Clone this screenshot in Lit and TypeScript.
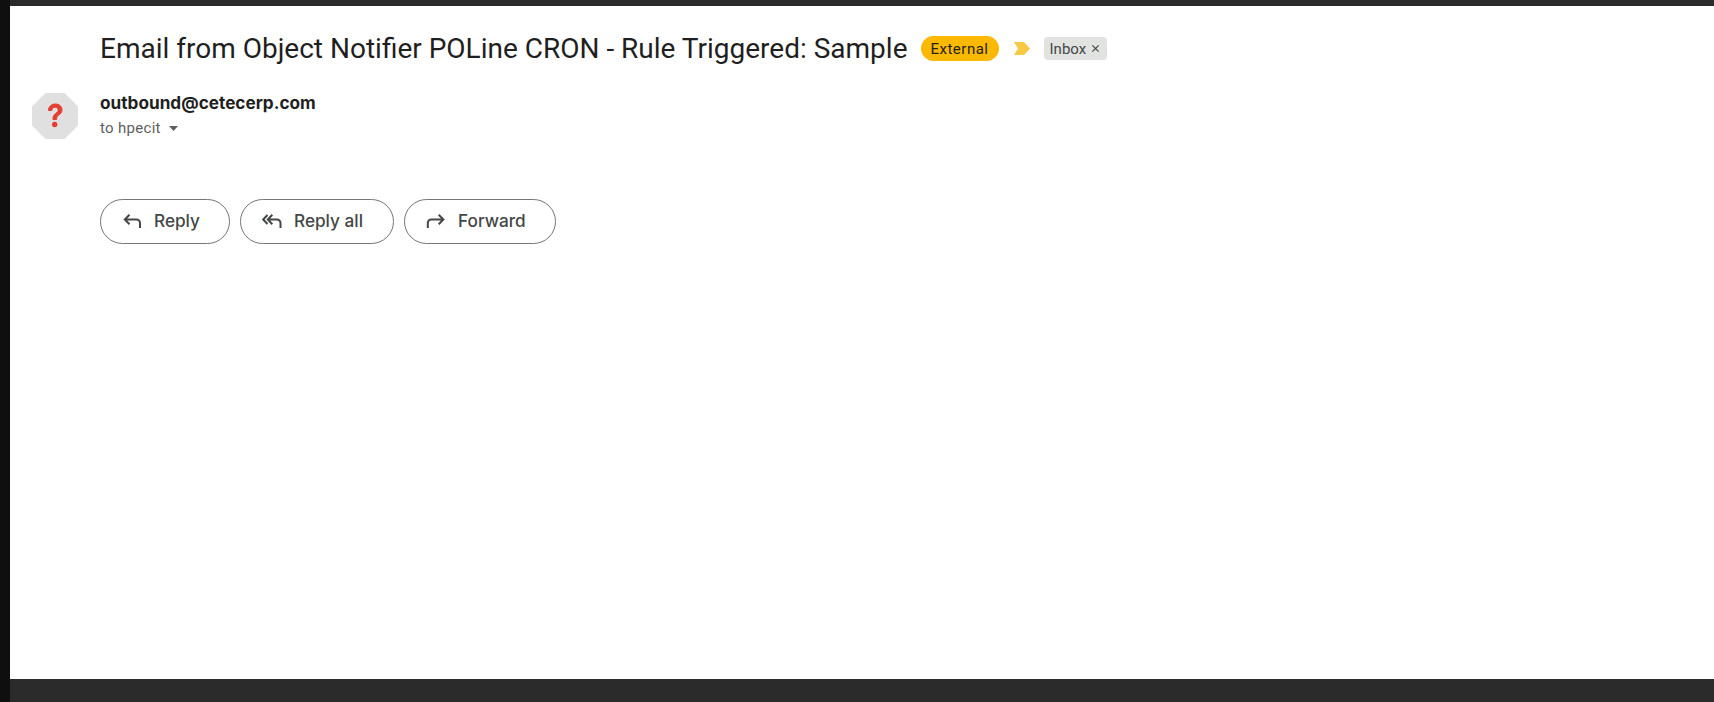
import { LitElement, html, css } from "lit";
import { customElement } from "lit/decorators.js";

@customElement("app-root")
export class AppRoot extends LitElement {
  static styles = css`
    :host {
      display: grid;
      grid-template-columns: 10px 1fr;
      width: 100%;
      height: 702px;
      overflow: hidden;
      background: #0f0f0f;
      font-family: Roboto, "Liberation Sans", sans-serif;
    }
    .frame { display: flex; flex-direction: column; min-width: 0; }
    .top { height: 6px; background: #2b2b2b; flex: none; }
    .bottom { height: 23px; background: #2b2b2b; flex: none; }
    .page { flex: 1; background: #fff; display: grid; grid-template-columns: 90px 1fr; align-content: start; }
    .avatar-col { padding: 87px 0 0 22px; }
    .main { min-width: 0; }
    .subject { display: flex; align-items: center; height: 29px; margin-top: 28px; }
    h1 { margin: 0; font-size: 28px; font-weight: 400; color: #1f1f1f; white-space: nowrap; }
    .pill { margin-left: 13px; height: 25px; width: 78px; border-radius: 13px; background: #fdb900; color: #222; font-size: 15px; letter-spacing: 0.5px; display: flex; align-items: center; justify-content: center; }
    .marker { margin-left: 15px; width: 16px; height: 13px; display: block; }
    .chip { margin-left: 14px; height: 23px; width: 63px; box-sizing: border-box; border-radius: 4px; background: #e1e3e1; color: #444746; font-size: 15px; display: flex; align-items: center; padding-left: 6px; gap: 5px; }
    .chip svg { width: 9px; height: 9px; display: block; }
    .sender { margin-top: 30px; font-family: Inter, Roboto, sans-serif; font-size: 17.2px; line-height: 20px; font-weight: 700; color: #1f1f1f; }
    .to { margin-top: 5px; display: flex; align-items: center; gap: 8px; font-size: 15px; letter-spacing: 0.3px; line-height: 20px; color: #5e5e5e; }
    .to svg { width: 9px; height: 5px; display: block; }
    .actions { display: flex; gap: 10px; margin-top: 61px; }
    .btn { height: 45px; box-sizing: border-box; border: 1px solid #747775; border-radius: 23px; background: #fff; display: flex; align-items: center; font-family: Inter, Roboto, sans-serif; font-size: 17.2px; font-weight: 500; color: #444746; padding: 0 0 2px 0; }
    .btn svg { width: 20px; height: 20px; display: block; flex: none; fill: none; stroke: #444746; stroke-width: 2; }
    .reply { width: 130px; padding-left: 22px; gap: 11px; }
    .replyall { width: 154px; padding-left: 21px; gap: 12px; }
    .forward { width: 152px; padding-left: 21px; gap: 12px; }
  `;

  render() {
    return html`
      <div></div>
      <div class="frame">
        <div class="top"></div>
        <div class="page">
          <div class="avatar-col">
            <svg width="46" height="46" viewBox="0 0 46 46">
              <polygon points="13.5,0 32.5,0 46,13.5 46,32.5 32.5,46 13.5,46 0,32.5 0,13.5" fill="#e0e0e0"></polygon>
              <path d="M16.5 17.5c0-4 3-6.5 6.8-6.5 3.900 0 6.700 2.300 6.700 5.800 0 2.700-1.500 4-3.200 5.300-1.600 1.200-2.300 2-2.300 4.400h-3.600c0-3.400 1.100-4.800 3-6.200 1.400-1 2.300-1.800 2.300-3.300 0-1.700-1.300-2.800-3.100-2.800-2 0-3.200 1.200-3.300 3.300z" fill="#e53f33" stroke="#e53f33" stroke-width="1"></path>
              <circle cx="22.7" cy="31.5" r="2.7" fill="#e53f33"></circle>
            </svg>
          </div>
          <div class="main">
            <div class="subject">
              <h1>Email from Object Notifier POLine CRON - Rule Triggered: Sample</h1>
              <span class="pill">External</span>
              <svg class="marker" viewBox="0 0 16 13"><polygon points="0,0 10,0 16,6.500 10,13 0,13 4,6.500" fill="#f8c945"></polygon></svg>
              <span class="chip">Inbox
                <svg viewBox="0 0 10 10"><path d="M1.500 1.500l7 7M8.500 1.500l-7 7" stroke="#444746" stroke-width="1.300" fill="none"></path></svg>
              </span>
            </div>
            <div class="sender">outbound@cetecerp.com</div>
            <div class="to">to hpecit
              <svg viewBox="0 0 9 5"><polygon points="0,0 9,0 4.500,5" fill="#5e5e5e"></polygon></svg>
            </div>
            <div class="actions">
              <button class="btn reply">
                <svg viewBox="0 0 20 20"><path d="M6.500 3.800L1.800 8.500l4.700 4.700M1.800 8.500H13.500a3.500 3.500 0 0 1 3.500 3.500V17"></path></svg>Reply
              </button>
              <button class="btn replyall">
                <svg viewBox="0 0 20 20"><path d="M5.500 4L1.200 8.500 5.500 13M10.300 3.800L5.800 8.500l4.500 4.700M5.800 8.500h9.200a3.500 3.500 0 0 1 3.500 3.500V17"></path></svg>Reply all
              </button>
              <button class="btn forward">
                <svg viewBox="0 0 20 20"><path d="M12.700 3.800L17.400 8.500l-4.700 4.700M17.400 8.500H5.300a3.500 3.500 0 0 0-3.500 3.500V17"></path></svg>Forward
              </button>
            </div>
          </div>
        </div>
        <div class="bottom"></div>
      </div>
    `;
  }
}
